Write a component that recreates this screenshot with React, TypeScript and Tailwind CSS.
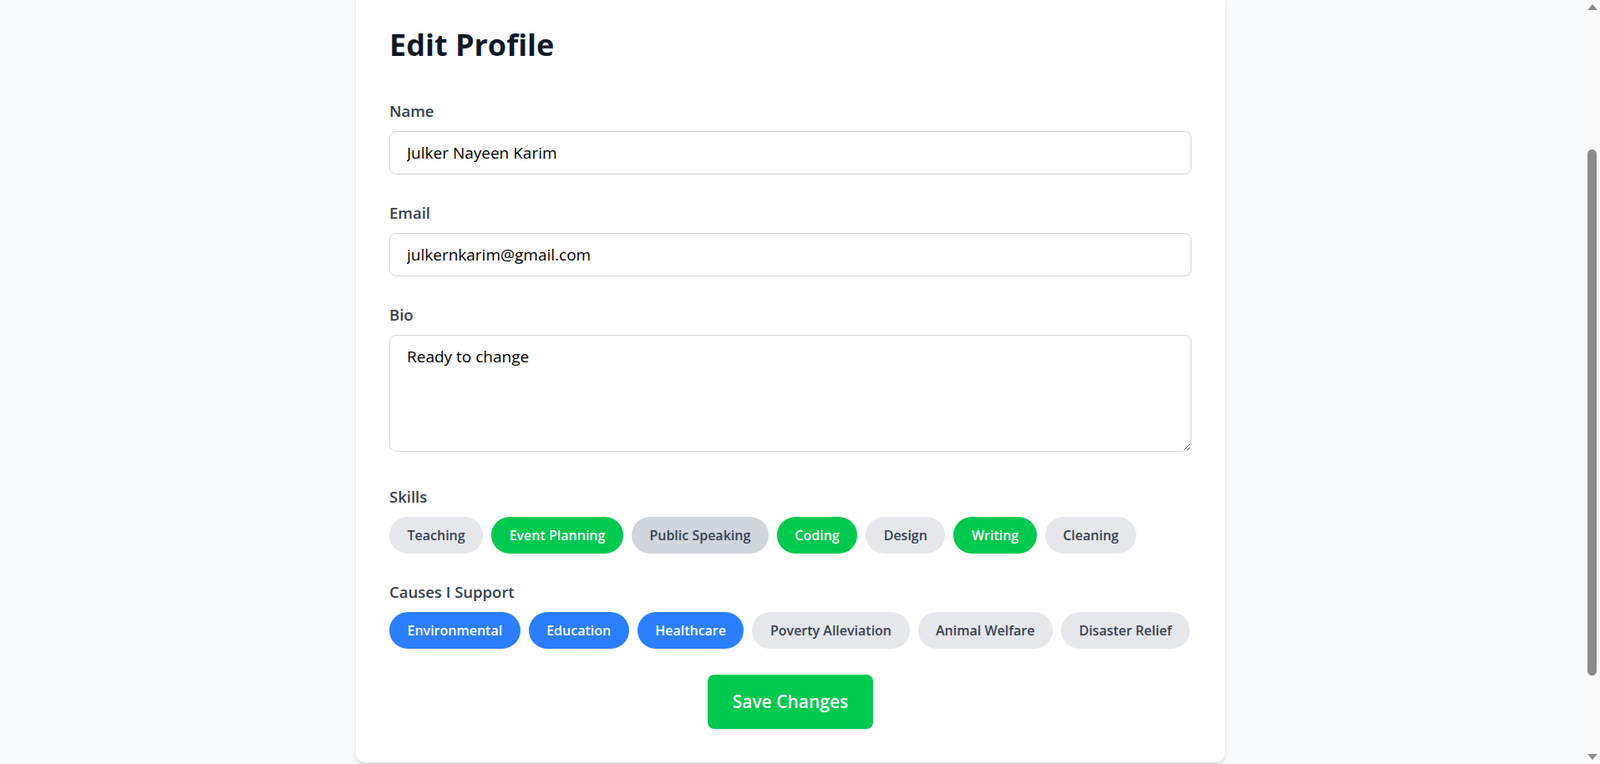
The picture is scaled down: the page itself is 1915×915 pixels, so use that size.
import { useEffect, useRef, useState } from 'react';

const SKILLS = ['Teaching', 'Event Planning', 'Public Speaking', 'Coding', 'Design', 'Writing', 'Cleaning'];
const CAUSES = ['Environmental', 'Education', 'Healthcare', 'Poverty Alleviation', 'Animal Welfare', 'Disaster Relief'];

function Chip({ label, active, tone, hovered }: { label: string; active: boolean; tone: 'green' | 'blue'; hovered?: boolean }) {
  let cls = 'bg-[#e5e7eb] text-[#364153]';
  if (active) cls = tone === 'green' ? 'bg-[#00c950] text-white' : 'bg-[#2b7fff] text-white';
  else if (hovered) cls = 'bg-[#d1d5dc] text-[#364153]';
  return (
    <button type="button" className={`h-[44px] px-[21.5px] rounded-full text-[16px] font-semibold leading-[25px] whitespace-nowrap ${cls}`}>
      {label}
    </button>
  );
}

function Scrollbar() {
  return (
    <div className="w-[19px] h-screen bg-[#fafafa] flex flex-col items-center">
      <div className="h-[17px] flex items-center justify-center">
        <svg width="12" height="7" viewBox="0 0 12 7">
          <polygon points="6,0 12,7 0,7" fill="#8b8b8b" />
        </svg>
      </div>
      <div className="h-[162px]" />
      <div className="w-[11px] h-[630px] rounded-full bg-[#8b8b8b]" />
      <div className="flex-1" />
      <div className="h-[17px] flex items-center justify-center">
        <svg width="12" height="7" viewBox="0 0 12 7">
          <polygon points="0,0 12,0 6,7" fill="#8b8b8b" />
        </svg>
      </div>
    </div>
  );
}

const labelCls = 'block text-[18.5px] leading-[25px] font-semibold text-[#364153] mb-3';
const fieldCls = 'block w-full px-5 border border-[#d1d5dc] rounded-[8px] text-[19px] text-black outline-none';

export default function App() {
  const [name, setName] = useState('Julker Nayeen Karim');
  const [email, setEmail] = useState('julkernkarim@gmail.com');
  const [bio, setBio] = useState('Ready to change');
  const skills = ['Event Planning', 'Coding', 'Writing'];
  const causes = ['Environmental', 'Education', 'Healthcare'];
  const pageRef = useRef<HTMLDivElement>(null);

  useEffect(() => {
    if (pageRef.current) pageRef.current.scrollTop = 235;
  }, []);

  return (
    <div className="h-screen flex bg-[#f9fafb] font-['Open_Sans','Noto_Sans',sans-serif]">
      <div ref={pageRef} className="flex-1 overflow-y-auto">
        <div className="pt-[226px] pb-[131px] pr-[4px]">
          <div className="w-[1040px] mx-auto bg-white rounded-[10px] shadow-md p-10">
            <h1 className="text-[36px] leading-[45px] font-bold text-[#101828] mb-[44px]">Edit Profile</h1>

            <label className={labelCls}>Name</label>
            <input value={name} onChange={(e) => setName(e.target.value)} className={`${fieldCls} h-[52px] mb-[33px]`} />

            <label className={labelCls}>Email</label>
            <input value={email} onChange={(e) => setEmail(e.target.value)} className={`${fieldCls} h-[52px] mb-[33px]`} />

            <label className={labelCls}>Bio</label>
            <textarea
              rows={4}
              value={bio}
              onChange={(e) => setBio(e.target.value)}
              className={`${fieldCls} h-[140px] py-[10px] leading-[30px] mb-[41px]`}
            />

            <div className={labelCls}>Skills</div>
            <div className="flex flex-wrap gap-[10px] mb-[33px]">
              {SKILLS.map((s) => (
                <Chip key={s} label={s} tone="green" active={skills.includes(s)} hovered={s === 'Public Speaking'} />
              ))}
            </div>

            <div className={labelCls}>Causes I Support</div>
            <div className="flex flex-wrap gap-[10px] mb-[31px]">
              {CAUSES.map((c) => (
                <Chip key={c} label={c} tone="blue" active={causes.includes(c)} />
              ))}
            </div>

            <div className="flex justify-center">
              <button type="button" className="h-[65px] px-[30px] rounded-[8px] bg-[#00c950] text-white text-[21px] font-semibold">
                Save Changes
              </button>
            </div>
          </div>
        </div>
      </div>
      <Scrollbar />
    </div>
  );
}
